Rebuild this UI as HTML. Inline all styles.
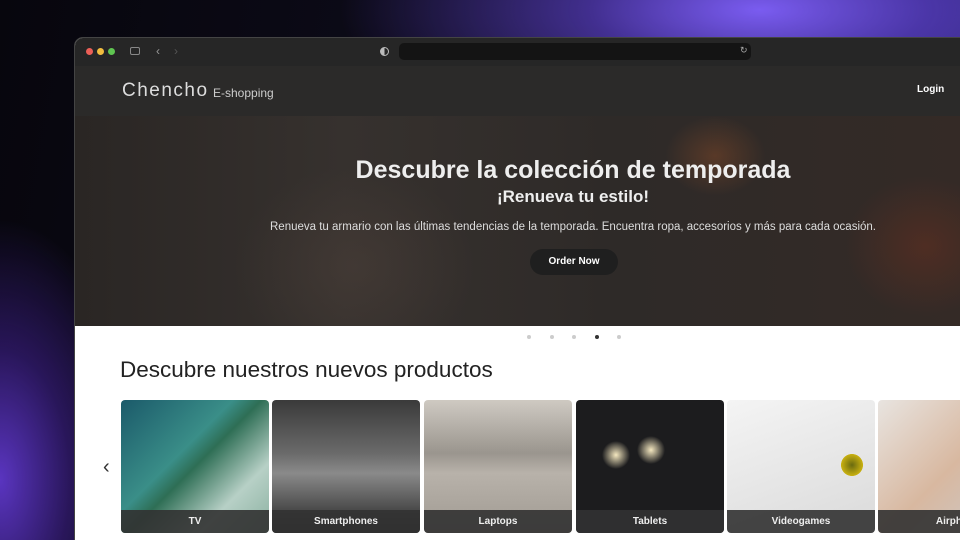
<!DOCTYPE html><html><head><style>
*{margin:0;padding:0;box-sizing:border-box}
html,body{width:960px;height:540px;overflow:hidden}
body{font-family:"Liberation Sans",sans-serif;background:
radial-gradient(ellipse 420px 140px at 760px 10px,#7a5cf0 0%,rgba(100,70,220,.6) 40%,rgba(0,0,0,0) 100%),
radial-gradient(ellipse 140px 260px at 0px 480px,#5a35c0 0%,rgba(80,40,180,.45) 50%,rgba(0,0,0,0) 100%),
linear-gradient(100deg,#07060d 0%,#0e0c1c 55%,#2d2470 100%);position:relative}
.win{position:absolute;left:74px;top:37px;width:900px;height:520px;border-radius:9px;overflow:hidden;background:#fff;border:1px solid #444}
.tb{height:28px;background:#262626;position:relative}
.dot{position:absolute;top:10px;width:7px;height:7px;border-radius:50%}
.url{position:absolute;left:324px;top:5px;width:352px;height:17px;background:#141414;border-radius:5px}
.hdr{height:50px;background:#2b2a29;position:relative;color:#ddd}
.hero{height:210px;position:relative;background:
radial-gradient(ellipse 50px 40px at 640px 40px,rgba(150,80,40,.4),transparent),
radial-gradient(ellipse 80px 70px at 850px 130px,rgba(120,50,30,.4),transparent),
radial-gradient(ellipse 120px 100px at 280px 150px,rgba(100,80,70,.25),transparent),
linear-gradient(90deg,#2a2624,#36312e 30%,#2e2a28 60%,#342a26);color:#eee;text-align:center}
.card{position:absolute;top:362px;width:148px;height:133px;border-radius:4px;overflow:hidden}
.card span{position:absolute;bottom:0;left:0;right:0;height:23px;background:rgba(50,50,50,.9);color:#eee;font-size:10px;line-height:23px;text-align:center;font-weight:bold}
</style></head><body>
<div class="win">
<div class="tb">
<div class="dot" style="left:11px;background:#ec5f57"></div><div class="dot" style="left:22px;background:#f2bd3f"></div><div class="dot" style="left:33px;background:#5fc551"></div>
<div style="position:absolute;left:55px;top:9px;width:10px;height:8px;border:1px solid #888;border-radius:2px"></div>
<div style="position:absolute;left:81px;top:6px;color:#999;font-size:12px">‹</div>
<div style="position:absolute;left:99px;top:6px;color:#555;font-size:12px">›</div>
<div style="position:absolute;left:305px;top:9px;width:9px;height:9px;border:1px solid #bbb;border-radius:50%;background:linear-gradient(90deg,#bbb 50%,transparent 50%)"></div>
<div class="url"></div>
<div style="position:absolute;left:665px;top:7px;color:#aaa;font-size:9px">↻</div>
</div>
<div class="hdr">
<div style="position:absolute;left:47px;top:14px;font-size:19px;letter-spacing:1.5px;color:#ddd">Chencho</div>
<div style="position:absolute;left:138px;top:20px;font-size:12px;color:#ccc">E-shopping</div>
<div style="position:absolute;left:842px;top:18px;font-size:10px;font-weight:bold;color:#fff">Login</div>
</div>
<div class="hero">
<div style="position:absolute;left:0;right:0;top:40px;font-size:25px;font-weight:bold;padding-left:98px">Descubre la colección de temporada</div>
<div style="position:absolute;left:0;right:0;top:71px;font-size:17px;font-weight:bold;padding-left:98px">¡Renueva tu estilo!</div>
<div style="position:absolute;left:0;right:0;top:105px;font-size:11.5px;color:#ddd;padding-left:98px">Renueva tu armario con las últimas tendencias de la temporada. Encuentra ropa, accesorios y más para cada ocasión.</div>
<div style="position:absolute;left:455px;top:133px;width:88px;height:26px;border-radius:13px;background:#1f1f1f;color:#fff;font-size:10px;line-height:26px;font-weight:bold">Order Now</div>
</div>
<div style="position:absolute;top:297px;left:452px;width:4px;height:4px;border-radius:50%;background:#ccc"></div>
<div style="position:absolute;top:297px;left:475px;width:4px;height:4px;border-radius:50%;background:#ccc"></div>
<div style="position:absolute;top:297px;left:497px;width:4px;height:4px;border-radius:50%;background:#ccc"></div>
<div style="position:absolute;top:297px;left:520px;width:4px;height:4px;border-radius:50%;background:#333"></div>
<div style="position:absolute;top:297px;left:542px;width:4px;height:4px;border-radius:50%;background:#ccc"></div>
<div style="position:absolute;left:45px;top:319px;font-size:22.5px;color:#222">Descubre nuestros nuevos productos</div>
<div style="position:absolute;left:28px;top:418px;font-size:20px;color:#333">‹</div>
<div class="card" style="left:46px;background:linear-gradient(135deg,#1b5a6a,#3a8e88 40%,#2e6e55 50%,#b7d0c6 75%,#8ab0a0)"><span>TV</span></div>
<div class="card" style="left:197px;background:linear-gradient(180deg,#3a3a3a,#6a6a6a 40%,#8a8a8a 55%,#222)"><span>Smartphones</span></div>
<div class="card" style="left:349px;background:linear-gradient(180deg,#cfcac2,#9a958e 40%,#b8b2aa 55%,#a09a92)"><span>Laptops</span></div>
<div class="card" style="left:501px;background:radial-gradient(circle 14px at 40px 55px,#f5e8c0,transparent),radial-gradient(circle 14px at 75px 50px,#f5e8c0,transparent),#1c1c1e"><span>Tablets</span></div>
<div class="card" style="left:652px;background:radial-gradient(circle 18px at 125px 65px,#6a6a10,#c8b010 60%,transparent 62%),linear-gradient(160deg,#f4f4f4,#dadada)"><span>Videogames</span></div>
<div class="card" style="left:803px;background:linear-gradient(135deg,#e8e4e0,#d8b8a0 50%,#c9ccd0)"><span>Airpho</span></div>
</div>
</body></html>
